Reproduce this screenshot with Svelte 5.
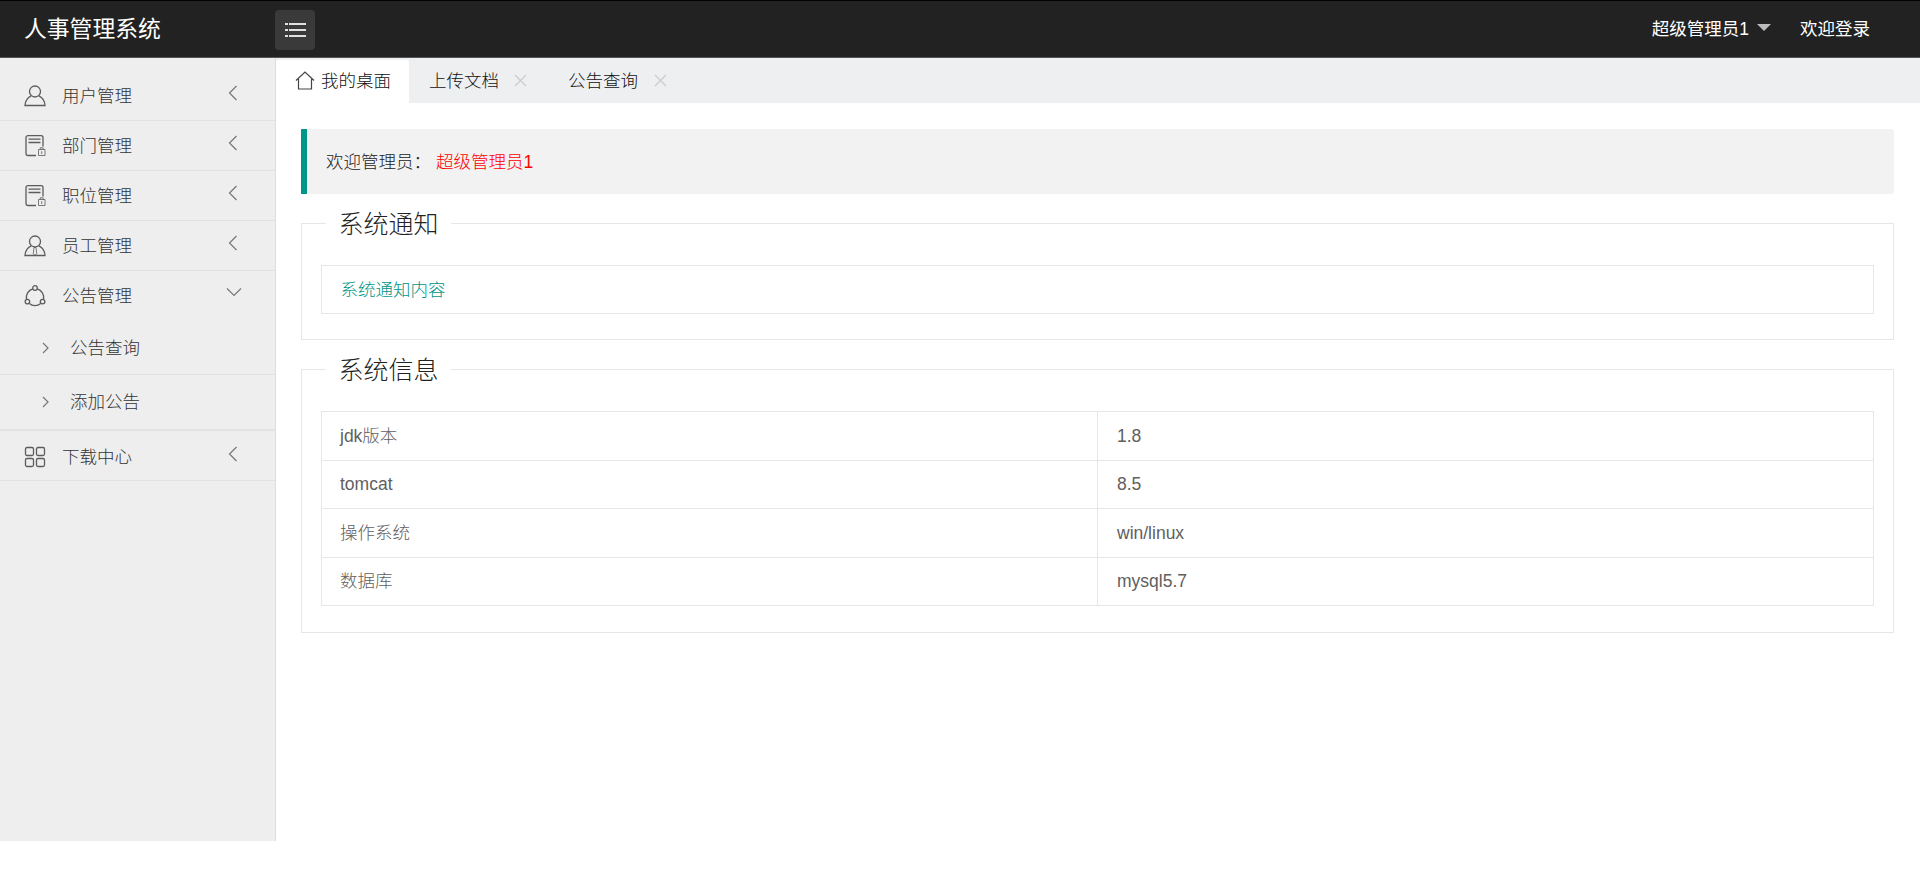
<script>
  const menus = [
    { label: '用户管理', icon: 'user' },
    { label: '部门管理', icon: 'doc' },
    { label: '职位管理', icon: 'doc' },
    { label: '员工管理', icon: 'staff' }
  ];
  const info = [
    ['jdk版本', '1.8'],
    ['tomcat', '8.5'],
    ['操作系统', 'win/linux'],
    ['数据库', 'mysql5.7']
  ];
</script>

{#snippet chevLeft()}
  <svg class="chev" width="10" height="16" viewBox="0 0 10 16"><path d="M8.5 1 1.5 8l7 7" /></svg>
{/snippet}

{#snippet icon(name)}
  <svg class="mi" width="22" height="22" viewBox="0 0 22 22">
    {#if name === 'user'}
      <circle cx="11" cy="6.5" r="5.500" />
      <path d="M7.200 10.800C3.800 12.400 1.200 15.800 1 20.500h20c-.2-4.700-2.800-8.100-6.200-9.700" />
    {:else if name === 'doc'}
      <path d="M12 20.500H4Q2 20.500 2 18.500V2.500Q2 .7 4 .7H17Q19 .7 19 2.500V11.500" />
      <path d="M4.500 4.200h12M4.500 7.500h12" />
      <path d="M14.500 14.500h6.500V20.500H14.500zM16.200 14.500V12.800h3v1.700M17.700 16.200v2.800" class="thin" />
    {:else if name === 'staff'}
      <circle cx="11" cy="6.500" r="5.500" />
      <path d="M7.200 10.800C3.800 12.400 1.200 15.800 1 20.500h20c-.2-4.700-2.800-8.100-6.200-9.700" />
      <path d="M10 12.500 9.300 18.500l1.700 2 1.700-2L12 12.500z" class="thin" />
    {:else if name === 'share'}
      <path d="M8.800 3.800A9 9 0 0 0 2.500 14.300M13.200 3.800A9 9 0 0 1 19.500 14.300M5.300 18.500a9 9 0 0 0 11.400 0" />
      <circle cx="11" cy="3" r="2.300" />
      <circle cx="3.400" cy="16.600" r="2.300" />
      <circle cx="18.600" cy="16.600" r="2.300" />
    {:else}
      <rect x="1.500" y="1.500" width="8" height="8" rx="1.500" />
      <rect x="12.500" y="1.500" width="8" height="8" rx="1.500" />
      <rect x="1.500" y="12.500" width="8" height="8" rx="1.500" />
      <rect x="12.500" y="12.500" width="8" height="8" rx="1.500" />
    {/if}
  </svg>
{/snippet}

{#snippet menuRow(label, name, open, tail)}
  <div class="row" class:open class:tail>
    {@render icon(name)}
    <span class="label">{label}</span>
    {#if open}
      <svg class="chev down" width="16" height="10" viewBox="0 0 16 10"><path d="M1 1.500 8 8.500l7-7" /></svg>
    {:else}
      {@render chevLeft()}
    {/if}
  </div>
{/snippet}

<div class="page">
  <header class="top">
    <div class="brand">人事管理系统</div>
    <button class="toggle" aria-label="菜单">
      <svg width="21" height="14" viewBox="0 0 21 14">
        <path d="M0 1h3M4 1h17M0 7h3M4 7h17M0 13h3M4 13h17" />
      </svg>
    </button>
    <div class="user">超级管理员1<span class="caret"></span></div>
    <div class="hello">欢迎登录</div>
  </header>

  <div class="body">
    <aside class="side">
      {#each menus as m}
        {@render menuRow(m.label, m.icon, false, false)}
      {/each}
      {@render menuRow('公告管理', 'share', true, false)}
      <div class="sub first">
        <svg class="subchev" width="7" height="12" viewBox="0 0 7 12"><path d="M1 1l5 5-5 5" /></svg>
        <span>公告查询</span>
      </div>
      <div class="sub last">
        <svg class="subchev" width="7" height="12" viewBox="0 0 7 12"><path d="M1 1l5 5-5 5" /></svg>
        <span>添加公告</span>
      </div>
      {@render menuRow('下载中心', 'grid', false, true)}
    </aside>

    <main class="main">
      <nav class="tabs">
        <div class="tab active">
          <svg class="home" width="20" height="19" viewBox="0 0 20 19">
            <path d="M1 9.500 10 1l9 8.500M3.500 8v10h13V8" />
          </svg>
          <span>我的桌面</span>
        </div>
        <div class="tab">
          <span>上传文档</span>
          <svg class="close" width="13" height="13" viewBox="0 0 13 13"><path d="M1 1l11 11M12 1 1 12" /></svg>
        </div>
        <div class="tab third">
          <span>公告查询</span>
          <svg class="close" width="13" height="13" viewBox="0 0 13 13"><path d="M1 1l11 11M12 1 1 12" /></svg>
        </div>
      </nav>

      <section class="content">
        <blockquote class="notice">欢迎管理员：<span class="red">超级管理员1</span></blockquote>

        <fieldset class="fs first-fs">
          <legend>系统通知</legend>
          <div class="note-box">系统通知内容</div>
        </fieldset>

        <fieldset class="fs second-fs">
          <legend>系统信息</legend>
          <table>
            <tbody>
              {#each info as r}
                <tr><td>{r[0]}</td><td>{r[1]}</td></tr>
              {/each}
            </tbody>
          </table>
        </fieldset>
      </section>
    </main>
  </div>
</div>

<style>
  :global(body) {
    margin: 0;
    background: #fff;
    font-family: "Liberation Sans", "Noto Sans CJK SC", sans-serif;
    font-size: 17.5px;
    line-height: 24px;
    font-weight: 300;
    color: #222;
  }
  .page { width: 1920px; }
  .top {
    height: 56px;
    border-top: 1px solid #000;
    border-bottom: 1px solid #555;
    background: #222;
    color: #fff;
    display: flex;
    align-items: center;
    box-sizing: content-box;
    font-weight: 400;
  }
  .brand {
    width: 275px;
    padding-left: 24px;
    box-sizing: border-box;
    font-size: 22.800px;
    line-height: 56px;
  }
  .toggle {
    width: 40px;
    height: 40px;
    margin: 2px 0 0;
    padding: 0;
    border: 0;
    border-radius: 4px;
    background: #3a3a3a;
    display: flex;
    align-items: center;
    justify-content: center;
  }
  .toggle svg path { stroke: #e0e0e0; stroke-width: 2; fill: none; }
  .user { margin-left: auto; display: flex; align-items: center; }
  .caret {
    width: 0;
    height: 0;
    margin: -4px 0 0 8px;
    border-left: 7px solid transparent;
    border-right: 7px solid transparent;
    border-top: 7px solid #bbb;
  }
  .hello { margin-left: 29px; margin-right: 50px; }

  .body { display: flex; height: 783px; }
  .side {
    width: 276px;
    flex: none;
    box-sizing: border-box;
    padding-top: 13px;
    background: #eee;
    border-right: 1px solid #ddd;
    color: #333;
  }
  .row {
    height: 50px;
    box-sizing: border-box;
    border-bottom: 1px solid #e2e2e2;
    display: flex;
    align-items: center;
    padding: 0 0 0 24px;
  }
  .row.open { border-bottom: 0; }
  .row.tail { padding-top: 2px; }
  .label { margin-left: 16px; width: 166px; }
  .mi { flex: none; }
  .mi :global(*) { fill: none; stroke: #5c5c5c; stroke-width: 1.300; }
  .mi .thin { stroke-width: 0.800; }
  .chev { margin: -6px 0 0 0; flex: none; }
  .chev path { fill: none; stroke: #777; stroke-width: 1.200; }
  .chev.down { margin-left: -2px; margin-top: -8px; }
  .sub {
    display: flex;
    align-items: center;
    padding-left: 42px;
    box-sizing: border-box;
    border-bottom: 1px solid #e2e2e2;
  }
  .sub.first { height: 54px; }
  .sub.last { height: 56px; border-bottom-width: 2px; }
  .sub span { margin-left: 21px; }
  .subchev path { fill: none; stroke: #777; stroke-width: 1.200; }

  .main { flex: 1; min-width: 0; }
  .tabs {
    height: 45px;
    background: #eeeff1;
    display: flex;
    color: #111;
  }
  .tab {
    display: flex;
    align-items: center;
    padding: 0 21px 2px 19px;
    margin-top: 2px;
    box-sizing: border-box;
  }
  .tab.active {
    width: 133px;
    padding: 0 0 2px 19px;
    background: #fff;
    border-radius: 2px 2px 0 0;
    margin-right: 1px;
  }
  .tab .home { margin-right: 6px; flex: none; }
  .home path { fill: none; stroke: #444; stroke-width: 1.200; }
  .tab.third { padding-left: 20px; }
  .close { margin-left: 15px; }
  .third .close { margin-left: 16px; }
  .close path { fill: none; stroke: #ccc; stroke-width: 1.300; }

  .content { padding: 26px 26px 0 25px; }
  .notice {
    margin: 0 0 14px;
    height: 65px;
    box-sizing: border-box;
    padding-left: 19px;
    border-left: 6px solid #009688;
    border-radius: 0 3px 3px 0;
    background: #f2f2f2;
    display: flex;
    align-items: center;
    color: #222;
  }
  .red { margin-left: 5px; color: #f00; }
  .fs {
    margin: 0;
    border: 1px solid #e6e6e6;
    min-width: 0;
    box-sizing: border-box;
  }
  .fs legend {
    margin-left: 5px;
    padding: 2px 12.500px 0;
    font-size: 25px;
    line-height: 28px;
    color: #222;
  }
  .first-fs { padding: 27px 19px 25px 19px; }
  .second-fs { margin-top: 14px; padding: 27px 19px 26px 19px; }
  .note-box {
    height: 49px;
    box-sizing: border-box;
    padding-left: 18.500px;
    border: 1px solid #e6e6e6;
    display: flex;
    align-items: center;
    color: #009688;
  }
  table {
    width: 100%;
    table-layout: fixed;
    border-collapse: collapse;
    color: #606060;
  }
  td {
    height: 48.500px;
    padding: 0 0 0 19px;
    border: 1px solid #e6e6e6;
    box-sizing: border-box;
  }
  td:first-child { padding-left: 18px; }
</style>
